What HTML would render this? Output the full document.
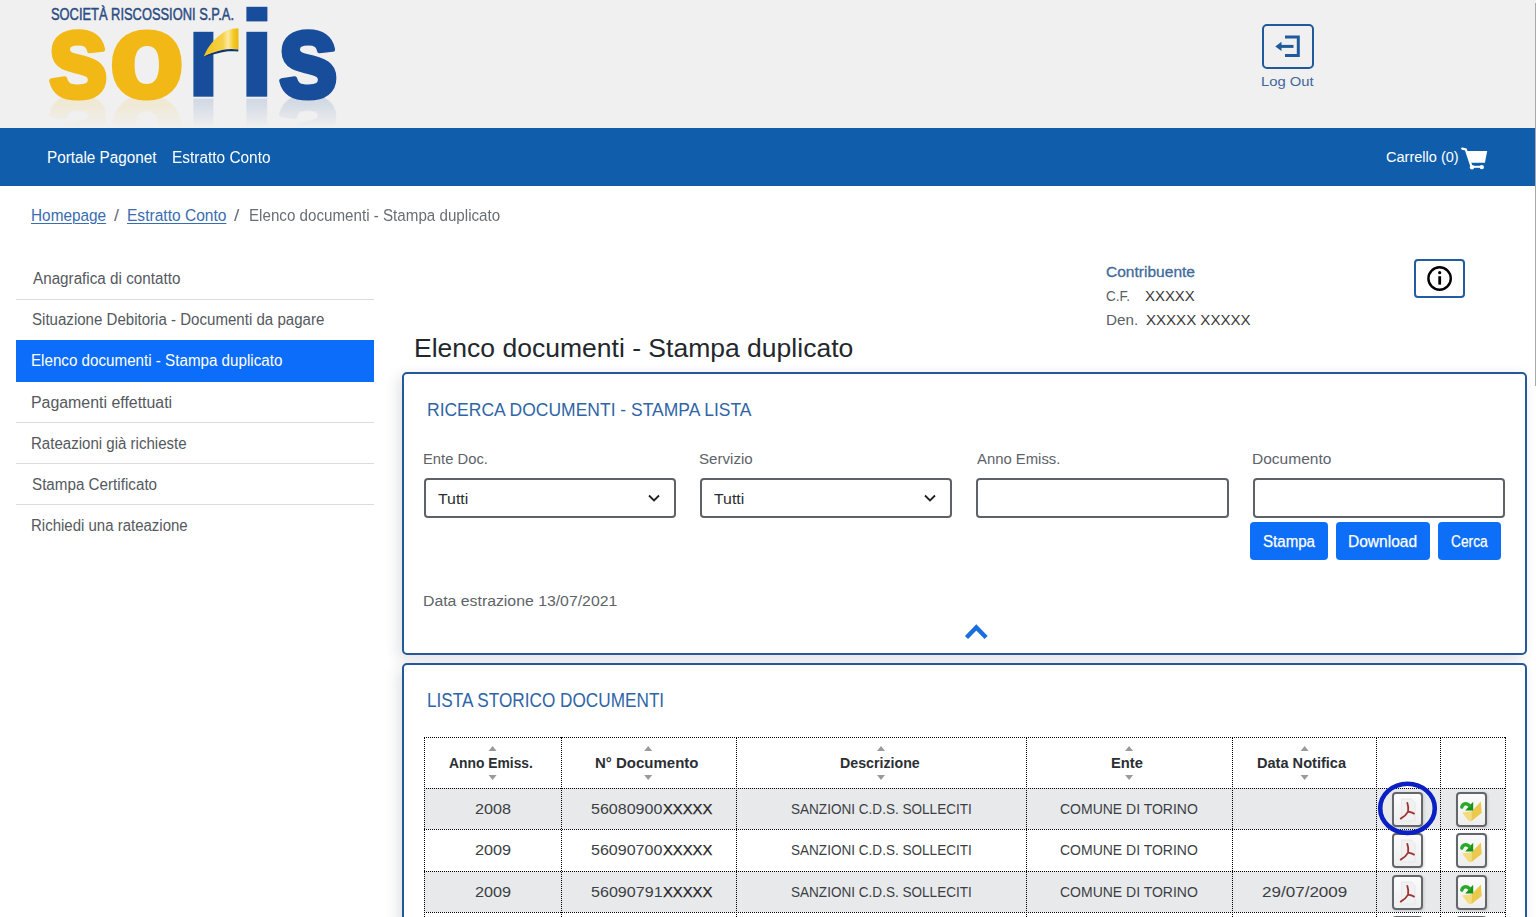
<!DOCTYPE html>
<html lang="it">
<head>
<meta charset="utf-8">
<title>Elenco documenti - Stampa duplicato</title>
<style>
html,body{margin:0;padding:0;}
body{width:1536px;height:917px;overflow:hidden;position:relative;background:#fff;font-family:"Liberation Sans",sans-serif;}
.a{position:absolute;box-sizing:border-box;}
.t{position:absolute;white-space:nowrap;line-height:1;transform-origin:0 0;}
.hdr{left:0;top:0;width:1536px;height:128px;background:#f0f0f0;}
.nav{left:0;top:128px;width:1535px;height:58px;background:#105eab;}
.sep{left:16px;width:358px;height:1px;background:#dcdcdc;}
.panel{left:402px;width:1125px;border:2px solid #24589a;border-radius:5px;background:#fff;box-shadow:-4px 4px 14px rgba(40,50,70,0.14);}
.fld{border:2px solid #5e6268;border-radius:4px;height:40px;top:478px;background:#fff;}
.btn{background:#0d6ef8;border-radius:4px;top:522px;height:38px;}
.hl{height:0;border-top:1px dotted #000;left:424px;width:1081px;}
.vl{width:0;border-left:1px dotted #000;top:737px;height:190px;}
.ibtn{width:31px;height:35px;border:2px solid #63666b;border-radius:4px;background:linear-gradient(#fbfbfb,#eeeeee);box-shadow:1px 1px 3px rgba(0,0,0,0.15);}
</style>
</head>
<body>
<!-- header -->
<div class="a hdr"></div>
<svg class="a" style="left:0;top:0" width="400" height="128" viewBox="0 0 400 128">
  <defs>
    <linearGradient id="sw" x1="0" y1="0" x2="1" y2="0">
      <stop offset="0" stop-color="#f1c21a"/>
      <stop offset="0.55" stop-color="#f6d24a"/>
      <stop offset="0.7" stop-color="#fbeaa0"/>
      <stop offset="0.85" stop-color="#f3c928"/>
      <stop offset="1" stop-color="#e9b80e"/>
    </linearGradient>
    <linearGradient id="rf" x1="0" y1="0" x2="0" y2="1">
      <stop offset="0" stop-color="#dfe3ea" stop-opacity="0.9"/>
      <stop offset="1" stop-color="#f0f0f0" stop-opacity="0"/>
    </linearGradient>
  </defs>
  <text x="51" y="19.8" font-family="Liberation Sans" font-weight="400" font-size="15.6" fill="#2b4c83" stroke="#2b4c83" stroke-width="0.45" textLength="183" lengthAdjust="spacingAndGlyphs">SOCIETÀ RISCOSSIONI S.P.A.</text>
  <mask id="rm" maskUnits="userSpaceOnUse" x="0" y="97" width="400" height="31"><rect x="0" y="97" width="400" height="31" fill="url(#rmg)"/></mask>
  <linearGradient id="rmg" x1="0" y1="0" x2="0" y2="1"><stop offset="0" stop-color="#fff" stop-opacity="0.16"/><stop offset="1" stop-color="#fff" stop-opacity="0"/></linearGradient>
  <g id="letters">
  <text x="47.6" y="96.6" font-family="Liberation Sans" font-weight="700" font-size="120" fill="#f2b816" stroke="#f2b816" stroke-width="5.2" stroke-linejoin="round" transform="translate(49.2 0) scale(0.91 1) translate(-49.2 0)">s</text>
  <text x="109.8" y="96.6" font-family="Liberation Sans" font-weight="700" font-size="120" fill="#f2b816" stroke="#f2b816" stroke-width="5.2" stroke-linejoin="round" transform="translate(112.3 0) scale(1.01 1) translate(-112.3 0)">o</text>
  <text x="277.6" y="96.6" font-family="Liberation Sans" font-weight="700" font-size="120" fill="#174d9b" stroke="#174d9b" stroke-width="5.2" stroke-linejoin="round" transform="translate(279.2 0) scale(0.91 1) translate(-279.2 0)">s</text>
  </g>
  <g mask="url(#rm)"><g transform="translate(0 195.4) scale(1 -1)">
   <use href="#letters"/>
   <rect x="193.4" y="31.8" width="20" height="64.9" fill="#174d9b"/>
   <rect x="246.4" y="31.8" width="20.8" height="64.9" fill="#174d9b"/>
  </g></g>
  <rect x="193.4" y="31.8" width="20" height="64.9" fill="#174d9b"/>
  <rect x="246.4" y="6.8" width="21" height="14.6" fill="#174d9b"/>
  <rect x="246.4" y="31.8" width="20.8" height="64.9" fill="#174d9b"/>
  <path d="M203.7,56.6 C208,46 216,36 226.8,30.5 C231,28.8 235,28.3 238.4,28.2 L238.6,49.2 C232,48.2 226,48.6 220,50.6 C214,52.4 208,54.6 203.7,56.6 Z" fill="url(#sw)"/>
  <path d="M203.7,56.8 C210,53.6 216,51.4 222,50 C228,48.8 233,48.8 238.4,49.6 L238.2,51.6 C232,51 227,51 221,52.4 C214,54 209,55.6 203.7,56.8 Z" fill="#10336a"/>
</svg>
<!-- logout -->
<div class="a" style="left:1262px;top:24px;width:52px;height:45px;border:2.4px solid #1f5b9b;border-radius:5px;"></div>
<svg class="a" style="left:1262px;top:24px" width="52" height="45" viewBox="1262 24 52 45">
  <path d="M1285,37 H1298.3 V55.4 H1285" fill="none" stroke="#1f5b9b" stroke-width="3"/>
  <path d="M1280,46.4 H1293.5" stroke="#1f5b9b" stroke-width="3"/>
  <path d="M1275.3,46.4 L1281.5,41.8 L1281.5,51 Z" fill="#1f5b9b"/>
</svg>
<!-- nav -->
<div class="a nav"></div>
<svg class="a" style="left:1458px;top:142px" width="34" height="32" viewBox="1458 142 34 32">
  <path d="M1462.2,148.6 L1465.8,149.4 L1471.2,165.6" fill="none" stroke="#fff" stroke-width="2.2" stroke-linecap="round"/>
  <path d="M1466.2,150.9 L1487.2,150.9 L1484.9,162.7 L1471.3,162.7 Z" fill="#fff"/>
  <path d="M1471.6,166.8 H1482" stroke="#fff" stroke-width="2"/>
  <circle cx="1472" cy="167.3" r="2.2" fill="#fff"/>
  <circle cx="1481.8" cy="167.1" r="2.2" fill="#fff"/>
</svg>
<!-- right edge -->
<div class="a" style="left:1535px;top:3px;width:1px;height:383px;background:#a9a9a9;"></div>

<!-- sidebar -->
<div class="a sep" style="top:299px"></div>
<div class="a" style="left:16px;top:340px;width:358px;height:41.5px;background:#0d6dfb;"></div>
<div class="a sep" style="top:422px"></div>
<div class="a sep" style="top:463px"></div>
<div class="a sep" style="top:504px"></div>

<!-- info button -->
<div class="a" style="left:1414px;top:259px;width:51px;height:39px;border:2px solid #245d9f;border-radius:4px;"></div>
<svg class="a" style="left:1414px;top:259px" width="51" height="39" viewBox="1414 259 51 39">
  <circle cx="1439.6" cy="278.5" r="11.2" fill="none" stroke="#000" stroke-width="2.4"/>
  <rect x="1438.3" y="276.2" width="2.8" height="8.4" fill="#000"/>
  <circle cx="1439.7" cy="272.7" r="1.6" fill="#000"/>
</svg>

<!-- panel 1 -->
<div class="a panel" style="top:372px;height:283px;"></div>
<div class="a fld" style="left:424px;width:252px;"></div>
<div class="a fld" style="left:700px;width:252px;"></div>
<div class="a fld" style="left:976px;width:253px;"></div>
<div class="a fld" style="left:1253px;width:252px;"></div>
<svg class="a" style="left:640px;top:488px" width="30" height="20" viewBox="640 488 30 20">
  <path d="M649,495.5 L654,500.5 L659,495.5" fill="none" stroke="#222" stroke-width="1.8"/>
</svg>
<svg class="a" style="left:916px;top:488px" width="30" height="20" viewBox="916 488 30 20">
  <path d="M925,495.5 L930,500.5 L935,495.5" fill="none" stroke="#222" stroke-width="1.8"/>
</svg>
<div class="a btn" style="left:1250px;width:78px;"></div>
<div class="a btn" style="left:1336px;width:94px;"></div>
<div class="a btn" style="left:1438px;width:63px;"></div>
<svg class="a" style="left:955px;top:615px" width="44" height="34" viewBox="955 615 44 34">
  <path d="M966.5,637.5 L976.3,627.5 L986.1,637.5" fill="none" stroke="#1b6fdc" stroke-width="4.4"/>
</svg>

<!-- panel 2 -->
<div class="a panel" style="top:663px;height:300px;"></div>
<!-- table -->
<div class="a" style="left:424px;top:788px;width:1081px;height:41px;background:#e8e9eb;"></div>
<div class="a" style="left:424px;top:871px;width:1081px;height:41px;background:#e8e9eb;"></div>
<div class="a hl" style="top:737px"></div>
<div class="a hl" style="top:788px"></div>
<div class="a hl" style="top:829px"></div>
<div class="a hl" style="top:871px"></div>
<div class="a hl" style="top:912px"></div>
<div class="a vl" style="left:424px"></div>
<div class="a vl" style="left:561px"></div>
<div class="a vl" style="left:736px"></div>
<div class="a vl" style="left:1026px"></div>
<div class="a vl" style="left:1232px"></div>
<div class="a vl" style="left:1376px"></div>
<div class="a vl" style="left:1440px"></div>
<div class="a vl" style="left:1505px"></div>
<svg class="a" style="left:424px;top:737px" width="1081" height="52" viewBox="424 737 1081 52" fill="#9a9a9a">
  <path d="M488.6,751 L492.6,746 L496.6,751 Z M488.6,775 L492.6,780 L496.6,775 Z"/>
  <path d="M644.2,751 L648.2,746 L652.2,751 Z M644.2,775 L648.2,780 L652.2,775 Z"/>
  <path d="M877,751 L881,746 L885,751 Z M877,775 L881,780 L885,775 Z"/>
  <path d="M1125.1,751 L1129.1,746 L1133.1,751 Z M1125.1,775 L1129.1,780 L1133.1,775 Z"/>
  <path d="M1300.6,751 L1304.6,746 L1308.6,751 Z M1300.6,775 L1304.6,780 L1308.6,775 Z"/>
</svg>
<div class="a ibtn" style="left:1392.3px;top:791.8px"></div>
<svg class="a" style="left:1392.3px;top:791.8px" width="31" height="35" viewBox="0 0 31 35">
 <path d="M9.5,7 H19.5 L23,10.5 V29 H9.5 Z" fill="#f1f1f3" stroke="#e4e4e8" stroke-width="0.8"/>
 <path d="M15.3,10.9 C16.3,13.5 16.4,16.8 16.1,19.6 C14.4,22.6 11.6,25.2 8.7,26.6 M16.1,19.6 C18.2,20.2 20.2,20.6 22,21.6" fill="none" stroke="#9e3430" stroke-width="1.8" stroke-linecap="round"/>
</svg>
<div class="a ibtn" style="left:1456.3px;top:791.8px"></div>
<svg class="a" style="left:1456.3px;top:791.8px" width="31" height="35" viewBox="0 0 31 35">
 <path d="M6.1,20.5 L15.7,19.2 L15.3,29.2 L12.2,28.4 Z" fill="#f3dc7a"/>
 <path d="M15.7,19.2 L24.9,9.6 L25.7,21 L15.3,29.2 Z" fill="#ecc94e"/>
 <path d="M17.2,9.8 L17.2,18.4 L9.2,18.4 Z" fill="#169416"/>
 <path d="M5.8,15.2 C6.6,11.6 10,10.6 13.6,13.6" fill="none" stroke="#2aa82a" stroke-width="3.4" stroke-linecap="round"/>
</svg>
<div class="a ibtn" style="left:1392.3px;top:833.3px"></div>
<svg class="a" style="left:1392.3px;top:833.3px" width="31" height="35" viewBox="0 0 31 35">
 <path d="M9.5,7 H19.5 L23,10.5 V29 H9.5 Z" fill="#f1f1f3" stroke="#e4e4e8" stroke-width="0.8"/>
 <path d="M15.3,10.9 C16.3,13.5 16.4,16.8 16.1,19.6 C14.4,22.6 11.6,25.2 8.7,26.6 M16.1,19.6 C18.2,20.2 20.2,20.6 22,21.6" fill="none" stroke="#9e3430" stroke-width="1.8" stroke-linecap="round"/>
</svg>
<div class="a ibtn" style="left:1456.3px;top:833.3px"></div>
<svg class="a" style="left:1456.3px;top:833.3px" width="31" height="35" viewBox="0 0 31 35">
 <path d="M6.1,20.5 L15.7,19.2 L15.3,29.2 L12.2,28.4 Z" fill="#f3dc7a"/>
 <path d="M15.7,19.2 L24.9,9.6 L25.7,21 L15.3,29.2 Z" fill="#ecc94e"/>
 <path d="M17.2,9.8 L17.2,18.4 L9.2,18.4 Z" fill="#169416"/>
 <path d="M5.8,15.2 C6.6,11.6 10,10.6 13.6,13.6" fill="none" stroke="#2aa82a" stroke-width="3.4" stroke-linecap="round"/>
</svg>
<div class="a ibtn" style="left:1392.3px;top:874.8px"></div>
<svg class="a" style="left:1392.3px;top:874.8px" width="31" height="35" viewBox="0 0 31 35">
 <path d="M9.5,7 H19.5 L23,10.5 V29 H9.5 Z" fill="#f1f1f3" stroke="#e4e4e8" stroke-width="0.8"/>
 <path d="M15.3,10.9 C16.3,13.5 16.4,16.8 16.1,19.6 C14.4,22.6 11.6,25.2 8.7,26.6 M16.1,19.6 C18.2,20.2 20.2,20.6 22,21.6" fill="none" stroke="#9e3430" stroke-width="1.8" stroke-linecap="round"/>
</svg>
<div class="a ibtn" style="left:1456.3px;top:874.8px"></div>
<svg class="a" style="left:1456.3px;top:874.8px" width="31" height="35" viewBox="0 0 31 35">
 <path d="M6.1,20.5 L15.7,19.2 L15.3,29.2 L12.2,28.4 Z" fill="#f3dc7a"/>
 <path d="M15.7,19.2 L24.9,9.6 L25.7,21 L15.3,29.2 Z" fill="#ecc94e"/>
 <path d="M17.2,9.8 L17.2,18.4 L9.2,18.4 Z" fill="#169416"/>
 <path d="M5.8,15.2 C6.6,11.6 10,10.6 13.6,13.6" fill="none" stroke="#2aa82a" stroke-width="3.4" stroke-linecap="round"/>
</svg>
<div class="a ibtn" style="left:1392.3px;top:916.3px"></div>
<svg class="a" style="left:1392.3px;top:916.3px" width="31" height="35" viewBox="0 0 31 35">
 <path d="M9.5,7 H19.5 L23,10.5 V29 H9.5 Z" fill="#f1f1f3" stroke="#e4e4e8" stroke-width="0.8"/>
 <path d="M15.3,10.9 C16.3,13.5 16.4,16.8 16.1,19.6 C14.4,22.6 11.6,25.2 8.7,26.6 M16.1,19.6 C18.2,20.2 20.2,20.6 22,21.6" fill="none" stroke="#9e3430" stroke-width="1.8" stroke-linecap="round"/>
</svg>
<div class="a ibtn" style="left:1456.3px;top:916.3px"></div>
<svg class="a" style="left:1456.3px;top:916.3px" width="31" height="35" viewBox="0 0 31 35">
 <path d="M6.1,20.5 L15.7,19.2 L15.3,29.2 L12.2,28.4 Z" fill="#f3dc7a"/>
 <path d="M15.7,19.2 L24.9,9.6 L25.7,21 L15.3,29.2 Z" fill="#ecc94e"/>
 <path d="M17.2,9.8 L17.2,18.4 L9.2,18.4 Z" fill="#169416"/>
 <path d="M5.8,15.2 C6.6,11.6 10,10.6 13.6,13.6" fill="none" stroke="#2aa82a" stroke-width="3.4" stroke-linecap="round"/>
</svg>
<svg class="a" style="left:1370px;top:778px" width="76" height="62" viewBox="1370 778 76 62"><ellipse cx="1407.5" cy="808.3" rx="27.3" ry="24.6" fill="none" stroke="#0a20c4" stroke-width="4.6"/></svg>
<div class="t" style="left:47.44px;top:149.64px;font-size:15.78px;color:#ffffff;font-weight:400;transform:scaleX(0.9680);">Portale Pagonet</div>
<div class="t" style="left:172.43px;top:149.64px;font-size:15.78px;color:#ffffff;font-weight:400;transform:scaleX(0.9779);">Estratto Conto</div>
<div class="t" style="left:1386.24px;top:149.00px;font-size:15.36px;color:#ffffff;font-weight:400;transform:scaleX(0.9455);">Carrello (0)</div>
<div class="t" style="left:1261.49px;top:75.25px;font-size:13.41px;color:#40679a;font-weight:400;transform:scaleX(1.1033);">Log Out</div>
<div class="t" style="left:30.74px;top:207.62px;font-size:15.92px;color:#3a6cb0;font-weight:400;transform:scaleX(0.9655);text-decoration:underline;text-underline-offset:1.5px;text-decoration-thickness:1px;">Homepage</div>
<div class="t" style="left:114.40px;top:207.62px;font-size:15.92px;color:#6a6e73;font-weight:400;transform:scaleX(1.1333);">/</div>
<div class="t" style="left:127.13px;top:207.62px;font-size:15.92px;color:#3a6cb0;font-weight:400;transform:scaleX(0.9779);text-decoration:underline;text-underline-offset:1.5px;text-decoration-thickness:1px;">Estratto Conto</div>
<div class="t" style="left:234.40px;top:207.62px;font-size:15.92px;color:#6a6e73;font-weight:400;transform:scaleX(1.2000);">/</div>
<div class="t" style="left:248.76px;top:207.62px;font-size:15.92px;color:#6a6e73;font-weight:400;transform:scaleX(0.9532);">Elenco documenti - Stampa duplicato</div>
<div class="t" style="left:32.60px;top:271.26px;font-size:15.64px;color:#55595e;font-weight:400;transform:scaleX(0.9750);">Anagrafica di contatto</div>
<div class="t" style="left:31.92px;top:312.36px;font-size:15.64px;color:#55595e;font-weight:400;transform:scaleX(0.9643);">Situazione Debitoria - Documenti da pagare</div>
<div class="t" style="left:31.43px;top:353.46px;font-size:15.64px;color:#ffffff;font-weight:400;transform:scaleX(0.9711);">Elenco documenti - Stampa duplicato</div>
<div class="t" style="left:31.38px;top:394.56px;font-size:15.64px;color:#55595e;font-weight:400;transform:scaleX(1.0173);">Pagamenti effettuati</div>
<div class="t" style="left:31.44px;top:435.66px;font-size:15.64px;color:#55595e;font-weight:400;transform:scaleX(0.9632);">Rateazioni già richieste</div>
<div class="t" style="left:31.92px;top:476.76px;font-size:15.64px;color:#55595e;font-weight:400;transform:scaleX(0.9731);">Stampa Certificato</div>
<div class="t" style="left:31.45px;top:517.86px;font-size:15.64px;color:#55595e;font-weight:400;transform:scaleX(0.9596);">Richiedi una rateazione</div>
<div class="t" style="left:1106.06px;top:265.49px;font-size:14.66px;color:#3f6b9b;font-weight:400;-webkit-text-stroke:0.3px #3f6b9b;transform:scaleX(1.0606);">Contribuente</div>
<div class="t" style="left:1106.15px;top:289.29px;font-size:14.66px;color:#5a5f64;font-weight:400;transform:scaleX(0.9216);">C.F.</div>
<div class="t" style="left:1144.99px;top:289.29px;font-size:14.66px;color:#3a3a3a;font-weight:400;transform:scaleX(1.0184);">XXXXX</div>
<div class="t" style="left:1105.55px;top:312.59px;font-size:14.66px;color:#5a5f64;font-weight:400;transform:scaleX(1.0389);">Den.</div>
<div class="t" style="left:1146.09px;top:312.59px;font-size:14.66px;color:#3a3a3a;font-weight:400;transform:scaleX(1.0269);">XXXXX XXXXX</div>
<div class="t" style="left:413.63px;top:335.47px;font-size:26.26px;color:#23282d;font-weight:400;transform:scaleX(1.0102);">Elenco documenti - Stampa duplicato</div>
<div class="t" style="left:427.04px;top:400.39px;font-size:19.27px;color:#2f65a7;font-weight:400;transform:scaleX(0.9077);">RICERCA DOCUMENTI - STAMPA LISTA</div>
<div class="t" style="left:423.25px;top:451.86px;font-size:14.11px;color:#5e6369;font-weight:400;transform:scaleX(1.0480);">Ente Doc.</div>
<div class="t" style="left:699.36px;top:451.86px;font-size:14.11px;color:#5e6369;font-weight:400;transform:scaleX(1.0707);">Servizio</div>
<div class="t" style="left:976.90px;top:451.86px;font-size:14.11px;color:#5e6369;font-weight:400;transform:scaleX(1.0528);">Anno Emiss.</div>
<div class="t" style="left:1251.99px;top:451.86px;font-size:14.11px;color:#5e6369;font-weight:400;transform:scaleX(1.1006);">Documento</div>
<div class="t" style="left:438.49px;top:491.00px;font-size:15.36px;color:#2a2e33;font-weight:400;transform:scaleX(1.0326);">Tutti</div>
<div class="t" style="left:714.49px;top:491.00px;font-size:15.36px;color:#2a2e33;font-weight:400;transform:scaleX(1.0326);">Tutti</div>
<div class="t" style="left:1262.63px;top:533.64px;font-size:15.78px;color:#ffffff;font-weight:400;-webkit-text-stroke:0.25px #ffffff;transform:scaleX(0.9571);">Stampa</div>
<div class="t" style="left:1348.32px;top:533.64px;font-size:15.78px;color:#ffffff;font-weight:400;-webkit-text-stroke:0.25px #ffffff;transform:scaleX(0.9853);">Download</div>
<div class="t" style="left:1450.80px;top:533.64px;font-size:15.78px;color:#ffffff;font-weight:400;-webkit-text-stroke:0.25px #ffffff;transform:scaleX(0.8713);">Cerca</div>
<div class="t" style="left:423.44px;top:593.03px;font-size:15.08px;color:#5e6369;font-weight:400;transform:scaleX(1.0486);">Data estrazione 13/07/2021</div>
<div class="t" style="left:427.39px;top:691.35px;font-size:19.55px;color:#2f65a7;font-weight:400;transform:scaleX(0.8800);">LISTA STORICO DOCUMENTI</div>
<div class="t" style="left:449.42px;top:756.39px;font-size:14.66px;color:#2b2f34;font-weight:700;transform:scaleX(0.9450);">Anno Emiss.</div>
<div class="t" style="left:595.08px;top:756.39px;font-size:14.66px;color:#2b2f34;font-weight:700;transform:scaleX(1.0231);">N° Documento</div>
<div class="t" style="left:839.73px;top:756.39px;font-size:14.66px;color:#2b2f34;font-weight:700;transform:scaleX(0.9687);">Descrizione</div>
<div class="t" style="left:1111.49px;top:756.39px;font-size:14.66px;color:#2b2f34;font-weight:700;transform:scaleX(1.0061);">Ente</div>
<div class="t" style="left:1257.31px;top:756.39px;font-size:14.66px;color:#2b2f34;font-weight:700;transform:scaleX(0.9938);">Data Notifica</div>
<div class="t" style="left:474.84px;top:801.85px;font-size:14.94px;color:#3b3f44;font-weight:400;transform:scaleX(1.0839);">2008</div>
<div class="t" style="left:591.16px;top:801.85px;font-size:14.94px;color:#3b3f44;font-weight:400;transform:scaleX(1.0741);">56080900</div>
<div class="t" style="left:663.20px;top:801.85px;font-size:14.94px;color:#222222;font-weight:400;-webkit-text-stroke:0.25px #222222;transform:scaleX(0.9908);">XXXXX</div>
<div class="t" style="left:791.46px;top:801.85px;font-size:14.94px;color:#3b3f44;font-weight:400;transform:scaleX(0.9075);">SANZIONI C.D.S. SOLLECITI</div>
<div class="t" style="left:1060.34px;top:801.85px;font-size:14.94px;color:#3b3f44;font-weight:400;transform:scaleX(0.9362);">COMUNE DI TORINO</div>
<div class="t" style="left:474.84px;top:843.35px;font-size:14.94px;color:#3b3f44;font-weight:400;transform:scaleX(1.0873);">2009</div>
<div class="t" style="left:591.16px;top:843.35px;font-size:14.94px;color:#3b3f44;font-weight:400;transform:scaleX(1.0741);">56090700</div>
<div class="t" style="left:663.20px;top:843.35px;font-size:14.94px;color:#222222;font-weight:400;-webkit-text-stroke:0.25px #222222;transform:scaleX(0.9908);">XXXXX</div>
<div class="t" style="left:791.46px;top:843.35px;font-size:14.94px;color:#3b3f44;font-weight:400;transform:scaleX(0.9075);">SANZIONI C.D.S. SOLLECITI</div>
<div class="t" style="left:1060.34px;top:843.35px;font-size:14.94px;color:#3b3f44;font-weight:400;transform:scaleX(0.9362);">COMUNE DI TORINO</div>
<div class="t" style="left:474.84px;top:884.85px;font-size:14.94px;color:#3b3f44;font-weight:400;transform:scaleX(1.0873);">2009</div>
<div class="t" style="left:591.16px;top:884.85px;font-size:14.94px;color:#3b3f44;font-weight:400;transform:scaleX(1.0774);">56090791</div>
<div class="t" style="left:663.20px;top:884.85px;font-size:14.94px;color:#222222;font-weight:400;-webkit-text-stroke:0.25px #222222;transform:scaleX(0.9908);">XXXXX</div>
<div class="t" style="left:791.46px;top:884.85px;font-size:14.94px;color:#3b3f44;font-weight:400;transform:scaleX(0.9075);">SANZIONI C.D.S. SOLLECITI</div>
<div class="t" style="left:1060.34px;top:884.85px;font-size:14.94px;color:#3b3f44;font-weight:400;transform:scaleX(0.9362);">COMUNE DI TORINO</div>
<div class="t" style="left:1261.60px;top:884.85px;font-size:14.94px;color:#3b3f44;font-weight:400;transform:scaleX(1.1411);">29/07/2009</div>
</body>
</html>
